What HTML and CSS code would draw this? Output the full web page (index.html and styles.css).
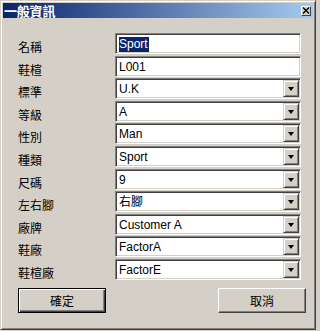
FILE: index.html
```html
<!DOCTYPE html>
<html lang="zh-Hant">
<head>
<meta charset="utf-8">
<title>一般資訊</title>
<link rel="stylesheet" href="styles.css">
</head>
<body>
<div class="window">
  <div class="titlebar">
    <span class="title">一般資訊</span>
    <span class="close"><svg width="8" height="7" viewBox="0 0 8 7"><path d="M1 0.5 L7 6.5 M7 0.5 L1 6.5" stroke="#000" stroke-width="1.4" fill="none"/></svg></span>
  </div>
  <div class="client">
    <div class="form">
      <div class="label">名稱</div>
      <div class="field"><span class="val"><span class="sel">Sport</span></span></div>
      <div class="label">鞋楦</div>
      <div class="field"><span class="val">L001</span></div>
      <div class="label">標準</div>
      <div class="field combo"><span class="val">U.K</span><span class="dd"><span class="arrow"></span></span></div>
      <div class="label">等級</div>
      <div class="field combo"><span class="val">A</span><span class="dd"><span class="arrow"></span></span></div>
      <div class="label">性別</div>
      <div class="field combo"><span class="val">Man</span><span class="dd"><span class="arrow"></span></span></div>
      <div class="label">種類</div>
      <div class="field combo"><span class="val">Sport</span><span class="dd"><span class="arrow"></span></span></div>
      <div class="label">尺碼</div>
      <div class="field combo"><span class="val">9</span><span class="dd"><span class="arrow"></span></span></div>
      <div class="label">左右腳</div>
      <div class="field combo"><span class="val">右腳</span><span class="dd"><span class="arrow"></span></span></div>
      <div class="label">廠牌</div>
      <div class="field combo"><span class="val">Customer A</span><span class="dd"><span class="arrow"></span></span></div>
      <div class="label">鞋廠</div>
      <div class="field combo"><span class="val">FactorA</span><span class="dd"><span class="arrow"></span></span></div>
      <div class="label">鞋楦廠</div>
      <div class="field combo"><span class="val">FactorE</span><span class="dd"><span class="arrow"></span></span></div>
    </div>
    <div class="buttons">
      <div class="btn default"><span>確定</span></div>
      <div class="btn"><span>取消</span></div>
    </div>
  </div>
</div>
</body>
</html>
```
FILE: styles.css
```css
html, body {
  margin: 0;
  padding: 0;
}
body {
  background: #d4d0c8;
  width: 318px;
  height: 331px;
  overflow: hidden;
  font-family: "Liberation Sans", "Noto Sans CJK TC", sans-serif;
}
.window {
  box-sizing: border-box;
  width: 316px;
  height: 330px;
  background: #d4d0c8;
  border: 1px solid;
  border-color: #d4d0c8 #404040 #404040 #d4d0c8;
  box-shadow: inset 1px 1px #ffffff, inset -1px -1px #808080;
  padding: 2px;
  display: flex;
  flex-direction: column;
}
.titlebar {
  height: 15px;
  background: linear-gradient(to right, #0a246a, #a6caf0);
  display: flex;
  align-items: center;
  justify-content: space-between;
  padding: 0 2px 0 1px;
}
.title {
  color: #ffffff;
  font-family: "Noto Sans CJK TC", sans-serif;
  font-weight: bold;
  font-size: 13px;
  line-height: 15px;
  letter-spacing: -0.2px;
}
.close {
  box-sizing: border-box;
  width: 10px;
  height: 10px;
  background: #d4d0c8;
  border: 1px solid;
  border-color: #ffffff #404040 #404040 #ffffff;
  display: flex;
  align-items: center;
  justify-content: center;
}
.close svg {
  display: block;
}
.client {
  padding: 15px 0 0 15px;
}
.form {
  display: grid;
  grid-template-columns: 97px 186px;
  grid-auto-rows: 21px;
  row-gap: 1.6px;
}
.label {
  font-family: "Noto Sans CJK TC", sans-serif;
  font-size: 12px;
  line-height: 21px;
  color: #000;
  padding-top: 3px;
  box-sizing: border-box;
}
.field {
  box-sizing: border-box;
  height: 21px;
  background: #ffffff;
  border: 1px solid;
  border-color: #808080 #ffffff #ffffff #808080;
  box-shadow: inset 1px 1px #404040, inset -1px -1px #d4d0c8;
  padding: 1px;
  display: flex;
  align-items: stretch;
}
.val {
  flex: 1;
  font-size: 12px;
  line-height: 17px;
  color: #000;
  padding-left: 2px;
  padding-top: 1px;
  white-space: nowrap;
  overflow: hidden;
}
.sel {
  background: #0a246a;
  color: #ffffff;
  display: inline-block;
  line-height: 15px;
  padding-right: 1px;
}
.dd {
  box-sizing: border-box;
  width: 16px;
  background: #d4d0c8;
  border: 1px solid;
  border-color: #d4d0c8 #404040 #404040 #d4d0c8;
  box-shadow: inset 1px 1px #ffffff, inset -1px -1px #808080;
  display: flex;
  align-items: center;
  justify-content: center;
}
.arrow {
  width: 0;
  height: 0;
  border-left: 3.5px solid transparent;
  border-right: 3.5px solid transparent;
  border-top: 4px solid #000;
  margin-top: 1px;
}
.buttons {
  display: flex;
  gap: 112px;
  margin-top: 8px;
}
.btn {
  box-sizing: border-box;
  width: 88px;
  height: 25px;
  background: #d4d0c8;
  border: 1px solid;
  border-color: #ffffff #404040 #404040 #ffffff;
  box-shadow: inset -1px -1px #808080;
  display: flex;
  align-items: center;
  justify-content: center;
  font-family: "Noto Sans CJK TC", sans-serif;
  font-size: 12px;
  color: #000;
}
.btn.default {
  border: 1px solid #000;
  box-shadow: inset 1px 1px #ffffff, inset -1px -1px #404040, inset -2px -2px #808080;
}
.btn span {
  line-height: 14px;
  padding-top: 1px;
}
```
